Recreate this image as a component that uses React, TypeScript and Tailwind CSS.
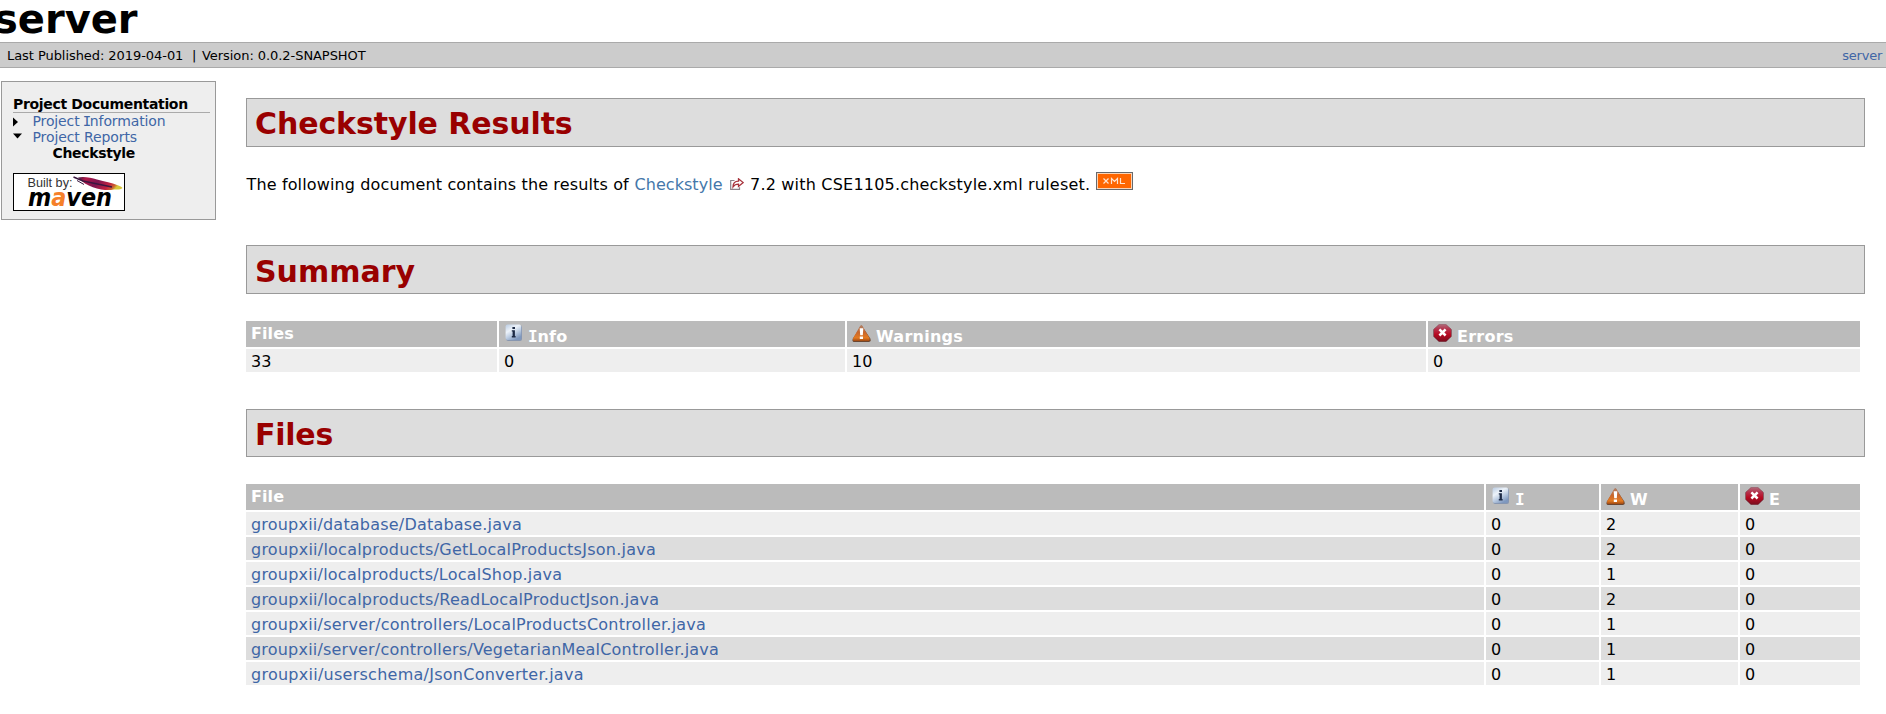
import type { ReactNode } from "react";

const files = [
  { name: "groupxii/database/Database.java", warnings: 2, tracking: "tracking-[0.2px]" },
  { name: "groupxii/localproducts/GetLocalProductsJson.java", warnings: 2, tracking: "tracking-[0.24px]" },
  { name: "groupxii/localproducts/LocalShop.java", warnings: 1, tracking: "tracking-[0.22px]" },
  { name: "groupxii/localproducts/ReadLocalProductJson.java", warnings: 2, tracking: "tracking-[0.24px]" },
  { name: "groupxii/server/controllers/LocalProductsController.java", warnings: 1, tracking: "tracking-[0.22px]" },
  { name: "groupxii/server/controllers/VegetarianMealController.java", warnings: 1, tracking: "tracking-[0.2px]" },
  { name: "groupxii/userschema/JsonConverter.java", warnings: 1, tracking: "tracking-[0.26px]" },
];

function InfoIcon() {
  return (
    <svg width="19" height="18" viewBox="0 0 19 18" className="shrink-0">
      <defs>
        <linearGradient id="info" x1="0" y1="0" x2="0.6" y2="1">
          <stop offset="0" stopColor="#b9cbe2" />
          <stop offset="0.4" stopColor="#edf3fa" />
          <stop offset="0.7" stopColor="#b8c9e0" />
          <stop offset="1" stopColor="#7f98be" />
        </linearGradient>
      </defs>
      <rect x="2.2" y="1.3" width="15.8" height="15.8" rx="2" fill="#8796b0" />
      <rect x="1.6" y="0.5" width="15.6" height="15.6" rx="2" fill="url(#info)" />
      <path d="M8.400 3h2.600v2H8.400zM7.800 6.200h3.100v5.900h.7v1.300H7.800v-1.300h.8V7.500h-.8z" fill="#1d2a45" />
    </svg>
  );
}

function WarningIcon() {
  return (
    <svg width="19" height="18" viewBox="0 0 19 18" className="shrink-0">
      <defs>
        <linearGradient id="warn" x1="0" y1="0" x2="0" y2="1">
          <stop offset="0" stopColor="#b08068" />
          <stop offset="0.45" stopColor="#c8662c" />
          <stop offset="0.8" stopColor="#e47a20" />
          <stop offset="1" stopColor="#a04a14" />
        </linearGradient>
      </defs>
      <path d="M9.600 1.400 L18.300 14.600 Q19.400 18 16.800 18 H2.200 Q-0.300 18 0.900 14.600 Z" fill="#6b4630" />
      <path d="M9.100 1.200 Q9.700 0.800 10.300 1.800 L17.600 14.200 Q18.200 17 16.200 17 H2.400 Q0.300 17 1.100 14.200 L8.200 1.800 Q8.600 1.200 9.100 1.200Z" fill="url(#warn)" />
      <path d="M7.700 4.200h3.600l-.5 7H8.200zM7.800 12.400h3.200v2.700H7.800z" fill="#fff" />
    </svg>
  );
}

function ErrorIcon() {
  return (
    <svg width="19" height="18" viewBox="0 0 19 18" className="shrink-0">
      <defs>
        <linearGradient id="err" x1="0" y1="0" x2="0" y2="1">
          <stop offset="0" stopColor="#b06a7a" />
          <stop offset="0.3" stopColor="#b5304a" />
          <stop offset="0.6" stopColor="#b80a22" />
          <stop offset="1" stopColor="#7c0d1e" />
        </linearGradient>
      </defs>
      <path d="M5.800 0.400h7.400l5.400 5v7.200l-5.400 5.200H5.800L0.400 12.600V5.400z" fill="#6e1f2e" />
      <path d="M6 0.400h7l5 4.900v7l-5 4.900H6l-5-4.900v-7z" fill="url(#err)" />
      <path d="M6.400 5.300l6.200 6.200M12.600 5.300l-6.200 6.200" stroke="#fff" strokeWidth="2.500" />
    </svg>
  );
}

function ExternalIcon() {
  return (
    <svg width="14" height="12" viewBox="0 0 14 12" className="shrink-0">
      <path d="M4.500 2.500H0.700V11.300H9.500V9.200" fill="none" stroke="#8b8289" strokeWidth="1.200" />
      <path d="M3 8.900C3 5.200 5.200 3.300 8.500 3.200V0.800L13.200 4.600L8.500 8.400V6.200C6 6.200 4.500 6.800 3 8.900Z" fill="#fff" stroke="#a8333c" strokeWidth="1.300" />
    </svg>
  );
}

function XmlBadge() {
  return (
    <svg width="37" height="18" viewBox="0 0 37 18" className="shrink-0">
      <rect width="37" height="18" fill="#66696d" />
      <rect x="1" y="1" width="35" height="16" fill="#fbd3b4" />
      <rect x="2" y="2" width="33" height="14" fill="#ff6600" />
      <path
        d="M7.500 6.500L12.500 11.500M12.500 6.500L7.500 11.500M15.500 12V6.500L18.500 9.500L21.500 6.500V12M24.500 6V11.500H29"
        fill="none"
        stroke="#ffe3cf"
        strokeWidth="1.200"
      />
    </svg>
  );
}

function MavenLogo() {
  return (
    <svg width="112" height="38" viewBox="0 0 112 38" className="block">
      <defs>
        <linearGradient id="feather" x1="0" y1="0" x2="1" y2="0.25">
          <stop offset="0" stopColor="#3b1a3f" />
          <stop offset="0.2" stopColor="#b01848" />
          <stop offset="0.5" stopColor="#7c1550" />
          <stop offset="0.8" stopColor="#c4213f" />
          <stop offset="0.93" stopColor="#c9642f" />
          <stop offset="1" stopColor="#d8c63a" />
        </linearGradient>
      </defs>
      <rect x="0.5" y="0.5" width="111" height="37" fill="#fff" stroke="#000" />
      <text x="14.500" y="13.500" fontSize="12" fill="#333" className="font-['Liberation_Sans']" textLength="45" lengthAdjust="spacingAndGlyphs">Built by:</text>
      <path d="M65 4.500C70 3 78 4.500 84 6.500C92 8.500 99 10 104 12C107 13 109 14 109.500 15C107 17.500 102 16 98 17C88 17.500 74 14.500 65 4.500Z" fill="url(#feather)" />
      <path d="M60.500 4L70 8L99 14" fill="none" stroke="#3a1740" strokeWidth="1.500" />
      <path d="M64 7.500L71 11.500" fill="none" stroke="#3a1740" strokeWidth="1" />
      <text x="15" y="32.500" fontSize="25" fontWeight="700" fontStyle="italic" fill="#000" className="font-['DejaVu_Sans']" textLength="84" lengthAdjust="spacingAndGlyphs">
        m<tspan fill="#f5802a">a</tspan>ven
      </text>
    </svg>
  );
}

function SectionTitle({ className, children }: { className: string; children: ReactNode }) {
  return (
    <h2 className={`w-[1619px] border border-[#999] bg-[#ddd] pl-[8px] text-[30px] font-bold text-[#900] ${className}`}>
      {children}
    </h2>
  );
}

function HeadCell({ icon, children }: { icon?: ReactNode; children: ReactNode }) {
  return (
    <div className="flex h-[26px] bg-[#bbb] pl-[5px] font-bold text-white">
      {icon ? <span className="mr-[5px] pt-[3px]">{icon}</span> : null}
      <span className={icon ? "leading-[31px] tracking-[0.25px]" : "leading-[25px] tracking-[0.1px]"}>{children}</span>
    </div>
  );
}

function Cell({ dark, children }: { dark?: boolean; children: ReactNode }) {
  return <div className={`h-[23px] pl-[5px] leading-[25px] ${dark ? "bg-[#ddd]" : "bg-[#eee]"}`}>{children}</div>;
}

const slabI = <span className="-mr-[0.5px] font-['DejaVu_Sans_Mono',monospace]">I</span>;

export default function App() {
  return (
    <div className="h-[714px] w-[1886px] overflow-hidden bg-white font-['DejaVu_Sans',sans-serif] text-[16px] text-black">
      <header>
        <h1 className="-ml-[6px] h-[42px] text-[40px] leading-[38px] font-bold">server</h1>
        <div className="flex h-[26px] justify-between border-y border-[#aaa] bg-[#ccc] pr-[4px] pl-[7px] text-[13px] leading-[26px]">
          <div className="flex">
            <span className="w-[185px] tracking-[-0.06px]">Last Published: 2019-04-01</span>
            <span className="w-[10px]">|</span>
            <span className="tracking-[-0.06px]">Version: 0.0.2-SNAPSHOT</span>
          </div>
          <a className="tracking-[-0.25px] text-[#4066a6]">server</a>
        </div>
      </header>

      <div className="flex items-start">
        <nav className="mt-[13px] ml-px h-[139px] w-[215px] border border-[#999] bg-[#eee] pt-[13px] pr-[5px] pl-[11px] text-[14px] leading-[16px]">
          <h5 className="h-[18px] border-b border-[#aaa] pt-px font-bold tracking-[-0.33px]">Project Documentation</h5>
          <ul className="text-[#4066a6]">
            <li className="flex h-[16px] items-center">
              <svg width="19.500" height="10" viewBox="0 0 19.500 10" className="mt-px"><path d="M0 0.500L5 5L0 9.500Z" fill="#000" /></svg>
              <span className="tracking-[-0.12px]">
                <span>Project </span>
                <span className="-mx-[1.2px] font-['DejaVu_Sans_Mono',monospace]">I</span>nformation
              </span>
            </li>
            <li className="flex h-[16px] items-center">
              <svg width="19.500" height="6" viewBox="0 0 19.500 6" className="-mt-[2px]"><path d="M0 0.500H9L4.500 5.500Z" fill="#000" /></svg>
              <span className="tracking-[-0.1px]">Project Reports</span>
            </li>
            <li className="h-[16px] pl-[39.5px] font-bold tracking-[-0.34px] text-black">Checkstyle</li>
          </ul>
          <div className="mt-[12px]"><MavenLogo /></div>
        </nav>

        <main className="ml-[30px] pt-[30px]">
          <SectionTitle className="h-[49px] leading-[50px] tracking-[-0.1px]">Checkstyle Results</SectionTitle>
          <p className="flex h-[98px] pt-[25px] leading-[25px]">
            <span className="w-[388px] pl-[0.5px] tracking-[0.14px]">The following document contains the results of</span>
            <a className="w-[96px] pl-[0.5px] tracking-[0.05px] text-[#47a]">Checkstyle</a>
            <span className="w-[20px] pt-[6px]"><ExternalIcon /></span>
            <span className="w-[346px] tracking-[0.2px]">7.2 with CSE1105.checkstyle.xml ruleset.</span>
            <XmlBadge />
          </p>

          <SectionTitle className="h-[49px] leading-[51px]">Summary</SectionTitle>
          <div className="mt-[27px] grid grid-cols-[251px_346px_579px_432px] gap-[2px]">
            <HeadCell>Files</HeadCell>
            <HeadCell icon={<InfoIcon />}>{slabI}nfo</HeadCell>
            <HeadCell icon={<WarningIcon />}>Warnings</HeadCell>
            <HeadCell icon={<ErrorIcon />}>Errors</HeadCell>
            <Cell>33</Cell>
            <Cell>0</Cell>
            <Cell>10</Cell>
            <Cell>0</Cell>
          </div>

          <SectionTitle className="mt-[37px] h-[48px] leading-[50px] tracking-[-0.25px]">Files</SectionTitle>
          <div className="mt-[27px] grid grid-cols-[1238px_113px_137px_120px] gap-[2px]">
            <HeadCell>File</HeadCell>
            <HeadCell icon={<InfoIcon />}>{slabI}</HeadCell>
            <HeadCell icon={<WarningIcon />}>W</HeadCell>
            <HeadCell icon={<ErrorIcon />}>E</HeadCell>
            {files.map((file, i) => (
              <div key={file.name} className="contents">
                <Cell dark={i % 2 === 1}><a className={`text-[#4066a6] ${file.tracking}`}>{file.name}</a></Cell>
                <Cell dark={i % 2 === 1}>0</Cell>
                <Cell dark={i % 2 === 1}>{file.warnings}</Cell>
                <Cell dark={i % 2 === 1}>0</Cell>
              </div>
            ))}
          </div>
        </main>
      </div>
    </div>
  );
}
